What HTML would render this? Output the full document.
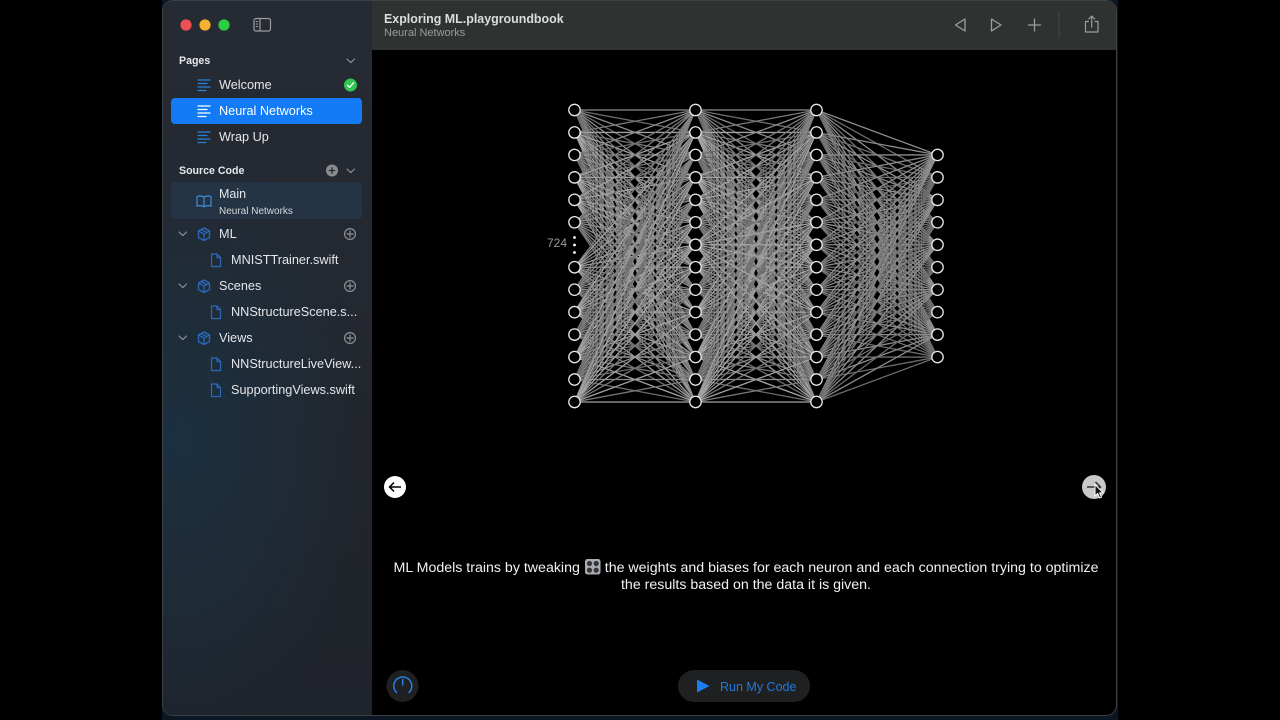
<!DOCTYPE html>
<html lang="en">
<head>
<meta charset="utf-8">
<title>Exploring ML.playgroundbook</title>
<style>
html,body{margin:0;padding:0;width:1280px;height:720px;overflow:hidden;background:#000;font-family:"Liberation Sans","DejaVu Sans",sans-serif}
.a{position:absolute;white-space:nowrap}
#wall{position:absolute;left:162px;top:0;width:956px;height:720px;background:#0b1722}
#win{position:absolute;left:163px;top:1px;width:953px;height:714px;border-radius:10px;overflow:hidden;background:#000;box-shadow:0 0 0 1px #3c4147}
#side{position:absolute;left:0;top:0;width:209px;height:714px;background:radial-gradient(ellipse 190px 320px at 20px 440px,#1c3040 0%,rgba(28,48,64,0) 100%),linear-gradient(180deg,#262a33 0%,#242830 40%,#22252b 62%,#1f232b 100%)}
#bar{position:absolute;left:209px;top:0;width:744px;height:49px;background:#2f3231}
.t{font-size:12.7px;color:#e4e6e9;line-height:16px}
.h{font-size:10.6px;font-weight:bold;color:#e6e8ea;line-height:14px}
svg{position:absolute;overflow:visible}
.ic{fill:none;stroke:#2f7fd0;stroke-width:1.2;stroke-linecap:round;stroke-linejoin:round}
.gr{fill:none;stroke:#8d9196;stroke-width:1.2;stroke-linecap:round;stroke-linejoin:round}
.tb{fill:none;stroke:#9c9e9e;stroke-width:1.3;stroke-linejoin:round;stroke-linecap:round}
</style>
</head>
<body>
<div id="wall"></div>
<div id="win">
  <div id="side"></div>
  <div id="bar"></div>
</div>

<svg style="left:0;top:0" width="1280" height="720" viewBox="0 0 1280 720">
  <defs>
    <path id="li" class="ic" d="M0 0H12M0 3.5H9M0 7H12M0 10.5H8" style="stroke:#2a82d8"/>
    <g id="file"><path class="ic" style="stroke:#2b69bd" d="M.5 0H6L9.5 3.5V12.5H.5ZM6 0V3.5H9.5"/></g>
    <g id="cube"><path class="ic" style="stroke:#2b69bd;stroke-width:1.3" d="M6 0L11.5 3V9.5L6 12.5L.5 9.5V3ZM.5 3L6 6.2L11.5 3M6 6.2V12.5M3 1.5L8.7 4.6"/></g>
    <g id="plus"><circle cx="6" cy="6" r="5.4" class="gr"/><path class="gr" d="M6 3V9M3 6H9"/></g>
    <path id="chev" class="gr" d="M0 0L3.8 3.6L7.6 0"/>
  </defs>

  <!-- traffic lights -->
  <circle cx="186" cy="25" r="5.6" fill="#ec4f54"/>
  <circle cx="205" cy="25" r="5.6" fill="#f4b22e"/>
  <circle cx="224" cy="25" r="5.6" fill="#2ecb45"/>
  <!-- sidebar toggle -->
  <rect x="254" y="18.5" width="16.5" height="12.5" rx="2" fill="none" stroke="#9a9da1" stroke-width="1.2"/>
  <path d="M260 18.5V31" stroke="#9a9da1" stroke-width="1.2"/>
  <path d="M255.8 21.5H258M255.8 24H258M255.8 26.5H258" stroke="#9a9da1" stroke-width="1"/>

  <!-- selected rows -->
  <rect x="171" y="98" width="191" height="26" rx="4" fill="#127bf5"/>
  <rect x="171" y="182" width="191" height="37" rx="4" fill="#253445"/>

  <!-- page icons -->
  <use href="#li" x="198" y="80"/>
  <path d="M198 106H210M198 109.5H207M198 113H210M198 116.5H206" stroke="#fff" stroke-width="1.2" fill="none" stroke-linecap="round"/>
  <use href="#li" x="198" y="132"/>
  <circle cx="350.500" cy="85" r="6.500" fill="#30c650"/>
  <path d="M347.500 85.200L349.600 87.300L353.500 82.800" fill="none" stroke="#fff" stroke-width="1.400" stroke-linecap="round" stroke-linejoin="round"/>

  <!-- chevrons -->
  <use href="#chev" x="347" y="59"/>
  <use href="#chev" x="347" y="169"/>
  <use href="#chev" x="179" y="232"/>
  <use href="#chev" x="179" y="284"/>
  <use href="#chev" x="179" y="336"/>

  <!-- source code plus -->
  <circle cx="332" cy="170.500" r="6" fill="#8a8c90"/>
  <path d="M332 167.300V173.700M328.800 170.500H335.200" stroke="#26292e" stroke-width="1.300"/>

  <!-- book -->
  <path class="ic" style="stroke:#3a8fd8" d="M204 197C201.500 195.800 199 195.800 197 196.600V206.200C199 205.400 201.500 205.400 204 206.800C206.500 205.400 209 205.400 211 206.200V196.600C209 195.800 206.500 195.800 204 197ZM204 197V206.800"/>

  <use href="#cube" x="198" y="228"/>
  <use href="#cube" x="198" y="280"/>
  <use href="#cube" x="198" y="332"/>
  <use href="#plus" x="344" y="228"/>
  <use href="#plus" x="344" y="280"/>
  <use href="#plus" x="344" y="332"/>
  <use href="#file" x="211" y="254"/>
  <use href="#file" x="211" y="306"/>
  <use href="#file" x="211" y="358"/>
  <use href="#file" x="211" y="384"/>

  <!-- toolbar icons -->
  <path class="tb" d="M965 19V31L955.500 25Z"/>
  <path class="tb" d="M991.500 19V31L1001 25Z"/>
  <path class="tb" d="M1034.500 19V31M1028.500 25H1040.500"/>
  <path d="M1059 12V38" stroke="#45484a" stroke-width="1"/>
  <path class="tb" style="stroke-width:1.200" d="M1088.500 21.500H1085.500V32H1098V21.500H1095M1091.700 27V16.500M1088.700 19L1091.700 16L1094.700 19"/>

  <!-- network -->
  <defs>
    <g id="fa" fill="none">
      <path vector-effect="non-scaling-stroke" stroke-width="1.300" stroke="#8c8c8c" d="M0 0L121 0M0 0L121 44.920M0 0L121 89.840M0 0L121 134.760M0 0L121 179.680M0 0L121 224.600M0 0L121 269.520"/>
      <path vector-effect="non-scaling-stroke" stroke-width="1.300" stroke="#6c6c6c" d="M0 0L121 22.460M0 0L121 67.380M0 0L121 112.300M0 0L121 157.220M0 0L121 202.140M0 0L121 247.060M0 0L121 291.980"/>
    </g>
    <g id="fb" fill="none">
      <path vector-effect="non-scaling-stroke" stroke-width="1.300" stroke="#787878" d="M0 0L121 0M0 0L121 44.920M0 0L121 89.840M0 0L121 179.680M0 0L121 224.600M0 0L121 269.520"/>
      <path vector-effect="non-scaling-stroke" stroke-width="1.300" stroke="#a2a2a2" d="M0 0L121 22.460M0 0L121 67.380M0 0L121 134.760M0 0L121 157.220M0 0L121 202.140M0 0L121 247.060M0 0L121 291.980M0 0L121 112.300"/>
    </g>
    <g id="fc" fill="none">
      <path vector-effect="non-scaling-stroke" stroke-width="1.300" stroke="#8c8c8c" d="M0 0L121 44.920M0 0L121 89.840M0 0L121 134.760M0 0L121 179.680M0 0L121 224.600"/>
      <path vector-effect="non-scaling-stroke" stroke-width="1.300" stroke="#6c6c6c" d="M0 0L121 67.380M0 0L121 112.300M0 0L121 157.220M0 0L121 202.140M0 0L121 247.060"/>
    </g>
    <g id="l1">
      <use href="#fa" transform="matrix(1 0 0 1 0 0)"/>
      <use href="#fb" transform="matrix(1 -.18562 0 1 0 22.460)"/>
      <use href="#fa" transform="matrix(1 -.37124 0 1 0 44.920)"/>
      <use href="#fb" transform="matrix(1 -.55686 0 1 0 67.380)"/>
      <use href="#fb" transform="matrix(1 -.74248 0 1 0 89.840)"/>
      <use href="#fa" transform="matrix(1 -.92810 0 1 0 112.300)"/>
      <use href="#fb" transform="matrix(1 -1.29934 0 1 0 157.220)"/>
      <use href="#fa" transform="matrix(1 -1.48496 0 1 0 179.680)"/>
      <use href="#fb" transform="matrix(1 -1.67058 0 1 0 202.140)"/>
      <use href="#fa" transform="matrix(1 -1.85620 0 1 0 224.600)"/>
      <use href="#fb" transform="matrix(1 -2.04182 0 1 0 247.060)"/>
      <use href="#fa" transform="matrix(1 -2.22744 0 1 0 269.520)"/>
      <use href="#fb" transform="matrix(1 -2.41306 0 1 0 291.980)"/>
    </g>
    <g id="col"><circle cy="0" r="5.700"/><circle cy="22.460" r="5.700"/><circle cy="44.920" r="5.700"/><circle cy="67.380" r="5.700"/><circle cy="89.840" r="5.700"/><circle cy="112.300" r="5.700"/><circle cy="157.220" r="5.700"/><circle cy="179.680" r="5.700"/><circle cy="202.140" r="5.700"/><circle cy="224.600" r="5.700"/><circle cy="247.060" r="5.700"/><circle cy="269.520" r="5.700"/><circle cy="291.980" r="5.700"/></g>
  </defs>
  <g transform="translate(574.500 110)">
    <use href="#l1"/>
    <g transform="translate(121 0)">
      <use href="#l1"/>
      <use href="#fb" transform="matrix(1 -1.11372 0 1 0 134.760)"/>
    </g>
    <g transform="translate(242 0)">
      <use href="#fc" transform="matrix(1 0 0 1 0 0)"/>
      <use href="#fc" transform="matrix(1 -.18562 0 1 0 22.460)"/>
      <use href="#fc" transform="matrix(1 -.37124 0 1 0 44.920)"/>
      <use href="#fc" transform="matrix(1 -.55686 0 1 0 67.380)"/>
      <use href="#fc" transform="matrix(1 -.74248 0 1 0 89.840)"/>
      <use href="#fc" transform="matrix(1 -.92810 0 1 0 112.300)"/>
      <use href="#fc" transform="matrix(1 -1.11372 0 1 0 134.760)"/>
      <use href="#fc" transform="matrix(1 -1.29934 0 1 0 157.220)"/>
      <use href="#fc" transform="matrix(1 -1.48496 0 1 0 179.680)"/>
      <use href="#fc" transform="matrix(1 -1.67058 0 1 0 202.140)"/>
      <use href="#fc" transform="matrix(1 -1.85620 0 1 0 224.600)"/>
      <use href="#fc" transform="matrix(1 -2.04182 0 1 0 247.060)"/>
      <use href="#fc" transform="matrix(1 -2.22744 0 1 0 269.520)"/>
      <use href="#fc" transform="matrix(1 -2.41306 0 1 0 291.980)"/>
    </g>
    <g fill="#000" stroke="#e8e8e8" stroke-width="1.300">
      <use href="#col" x="0"/>
      <use href="#col" x="121"/><circle cx="121" cy="134.760" r="5.700"/>
      <use href="#col" x="242"/><circle cx="242" cy="134.760" r="5.700"/>
      <circle cx="363" cy="44.920" r="5.700"/><circle cx="363" cy="67.380" r="5.700"/><circle cx="363" cy="89.840" r="5.700"/><circle cx="363" cy="112.300" r="5.700"/><circle cx="363" cy="134.760" r="5.700"/><circle cx="363" cy="157.220" r="5.700"/><circle cx="363" cy="179.680" r="5.700"/><circle cx="363" cy="202.140" r="5.700"/><circle cx="363" cy="224.600" r="5.700"/><circle cx="363" cy="247.060" r="5.700"/>
    </g>
    <circle cx="0" cy="127.500" r="1.400" fill="#fff"/><circle cx="0" cy="135" r="1.400" fill="#fff"/><circle cx="0" cy="142.500" r="1.400" fill="#fff"/>
  </g>

  <!-- round arrows -->
  <circle cx="395" cy="487" r="11" fill="#fff"/>
  <path d="M401 487H389.500M394 482.500L389.500 487L394 491.500" fill="none" stroke="#000" stroke-width="1.500"/>
  <circle cx="1094" cy="487" r="12" fill="#c9c9c9"/>
  <path d="M1087 487H1100M1095.500 482L1100.500 487L1095.500 492" fill="none" stroke="#333" stroke-width="1.500"/>
  <path d="M1095 484.500V496L1097.700 493.500L1099.600 498L1101.500 497.200L1099.600 492.900L1103 492.700Z" fill="#111" stroke="#fff" stroke-width="1"/>

  <!-- emoji knobs -->
  <rect x="585" y="559" width="15.500" height="15.500" rx="2.500" fill="#a9adb0"/>
  <circle cx="589.500" cy="563.500" r="2.600" fill="#33363a"/><circle cx="596.200" cy="563.500" r="2.600" fill="#33363a"/>
  <circle cx="589.500" cy="570.200" r="2.600" fill="#33363a"/><circle cx="596.200" cy="570.200" r="2.600" fill="#33363a"/>

  <!-- bottom controls -->
  <circle cx="402.500" cy="686" r="16" fill="#1f2021"/>
  <path d="M396.500 692.500A9 9 0 1 1 409 692.500M402.700 679.500V685" fill="none" stroke="#2b7fe0" stroke-width="1.500" stroke-linecap="round"/>
  <rect x="678" y="670" width="132" height="32" rx="16" fill="#1f2021"/>
  <path d="M697 679.500V692.500L709.500 686Z" fill="#1c7ff0"/>
</svg>

<div class="a h" style="left:179px;top:54px">Pages</div>
<div class="a t" style="left:219px;top:77px">Welcome</div>
<div class="a t" style="left:219px;top:103px;color:#fff">Neural Networks</div>
<div class="a t" style="left:219px;top:129px">Wrap Up</div>
<div class="a h" style="left:179px;top:164px">Source Code</div>
<div class="a t" style="left:219px;top:186px;font-size:12.500px">Main</div>
<div class="a" style="left:219px;top:204px;font-size:10px;line-height:12px;color:#d5d8dc;margin-top:2px">Neural Networks</div>
<div class="a t" style="left:219px;top:226px">ML</div>
<div class="a t" style="left:231px;top:252px">MNISTTrainer.swift</div>
<div class="a t" style="left:219px;top:278px">Scenes</div>
<div class="a t" style="left:231px;top:304px">NNStructureScene.s...</div>
<div class="a t" style="left:219px;top:330px">Views</div>
<div class="a t" style="left:231px;top:356px">NNStructureLiveView...</div>
<div class="a t" style="left:231px;top:382px">SupportingViews.swift</div>

<div class="a" style="left:384px;top:11px;font-size:12.450px;line-height:16px;font-weight:bold;color:#dcdddd">Exploring ML.playgroundbook</div>
<div class="a" style="left:384px;top:27px;font-size:11px;line-height:13px;color:#9a9c9c">Neural Networks</div>

<div class="a" style="left:547px;top:236px;font-size:12px;line-height:14px;color:#9b9b9b">724</div>

<div class="a" style="left:374px;width:744px;top:560px;text-align:center;font-size:14.200px;line-height:17px;color:#f2f2f2">ML Models trains by tweaking <span style="display:inline-block;width:17px"></span> the weights and biases for each neuron and each connection trying to optimize<br>the results based on the data it is given.</div>

<div class="a" style="left:720px;top:679px;font-size:12.500px;line-height:16px;color:#2479d8">Run My Code</div>
</body>
</html>
